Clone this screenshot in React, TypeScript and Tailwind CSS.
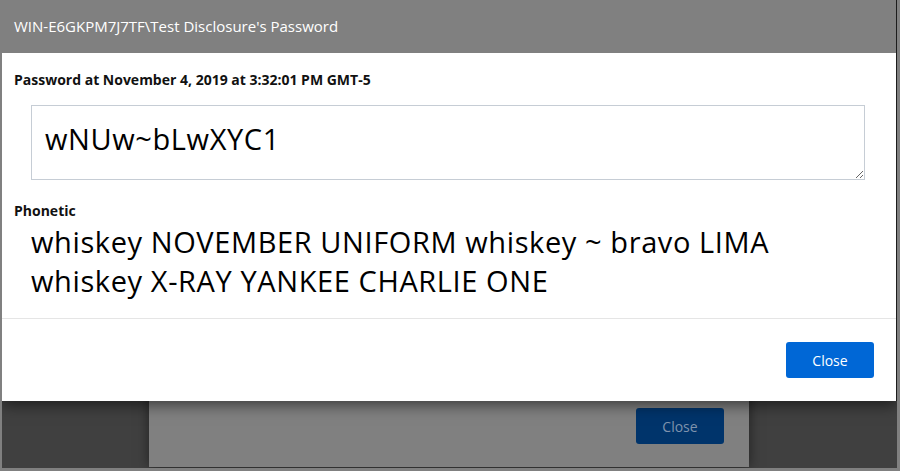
import React from 'react';

const password = 'wNUw~bLwXYC1';
const phonetic = 'whiskey NOVEMBER UNIFORM whiskey ~ bravo LIMA whiskey X-RAY YANKEE CHARLIE ONE';

export default function App() {
  return (
    <div className="w-[900px] h-[471px] bg-[#808080] pl-[2px] pr-[3px] pb-[3px] font-['Open_Sans',sans-serif]">
      <div className="relative h-full bg-[#404040] overflow-hidden">
        {/* dimmed dialog underneath */}
        <div className="absolute left-[147px] top-[80px] bottom-[1px] w-[600px] bg-[#808080] shadow-[0_0_12px_rgba(0,0,0,0.5)] flex justify-end items-end pr-[25px] pb-[23px]">
          <div className="w-[88px] h-[36px] rounded-[3px] bg-[#00346b] text-[#7f93ad] text-[14px] flex items-center justify-center">Close</div>
        </div>

        {/* active dialog */}
        <div className="absolute top-0 left-0 right-0 bg-white shadow-[0_4px_14px_rgba(0,0,0,0.55)] border-r border-[#1c1c1c]">
          <div className="h-[53px] bg-[#808080] flex items-center px-[12px] text-white text-[15px]">
            WIN-E6GKPM7J7TF\Test Disclosure's Password
          </div>
          <div className="pt-[17px] pb-[18px]">
            <div className="px-[12px] text-[14px] leading-[19.5px] font-bold text-[#111]">
              Password at November 4, 2019 at 3:32:01 PM GMT-5
            </div>
            <div className="pl-[29px] pr-[31px] mt-[15.5px]">
              <textarea
                readOnly
                defaultValue={password}
                className="block w-full h-[75px] border border-[#c6cdd5] px-[13px] pt-[13px] text-[29px] leading-[39px] tracking-[0.6px] text-black outline-none resize-y"
              />
            </div>
            <div className="px-[12px] mt-[21px] text-[14px] leading-[19.5px] font-bold text-[#111]">Phonetic</div>
            <div className="pl-[29px] pr-[31px] mt-[1.5px] text-[29px] leading-[39px] tracking-[0.6px] text-black">{phonetic}</div>
          </div>
          <div className="border-t border-[#e5e5e5] h-[83px] flex items-center justify-end pr-[22px]">
            <button className="w-[88px] h-[36px] rounded-[3px] bg-[#0067d6] text-white text-[14px]">Close</button>
          </div>
        </div>
      </div>
    </div>
  );
}
